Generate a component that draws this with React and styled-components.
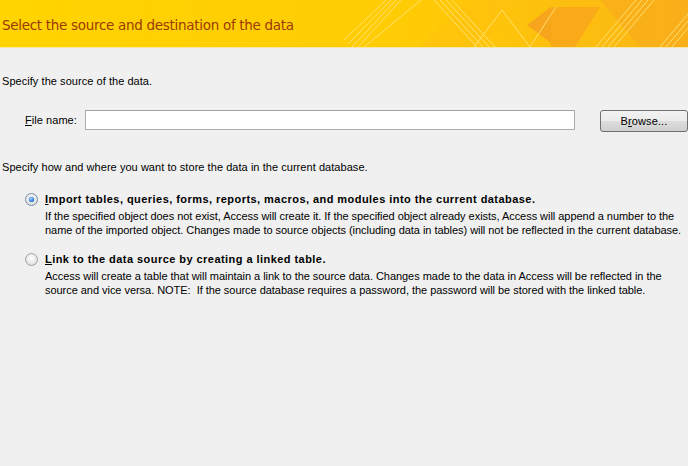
import React from 'react';
import styled, { createGlobalStyle } from 'styled-components';

const GlobalStyle = createGlobalStyle`
  html, body {
    margin: 0;
    padding: 0;
    background: #f0f0f0;
  }
  body {
    font-family: 'Liberation Sans', Arial, sans-serif;
    font-size: 11px;
    color: #000;
  }
`;

const Page = styled.div`
  width: 688px;
  height: 466px;
  overflow: hidden;
  background: #f0f0f0;
`;

const Banner = styled.div`
  position: relative;
  height: 47px;
  border-bottom: 1px solid #f6e7a8;
  background: #ffd200;
  overflow: hidden;
`;

const BannerArt = styled.svg`
  position: absolute;
  left: 0;
  top: 0;
`;

const Title = styled.h1`
  position: relative;
  margin: 0;
  padding: 17px 0 0 2px;
  font-family: 'DejaVu Sans', sans-serif;
  font-size: 13.5px;
  font-weight: 400;
  letter-spacing: -0.3px;
  color: #9b3a05;
`;

const Body = styled.div`
  padding: 26px 0 0 2px;
`;

const Line = styled.p`
  margin: 0;
  line-height: 14px;
  letter-spacing: 0.05px;
`;

const FileRow = styled.div`
  display: flex;
  align-items: center;
  margin: 20px 0 28px 0;
`;

const Label = styled.label`
  width: 60px;
  padding-left: 23px;
  letter-spacing: 0.05px;
`;

const TextBox = styled.div`
  width: 488px;
  height: 18px;
  background: #fff;
  border: 1px solid #abadb3;
  border-top-color: #9fa2aa;
`;

const Button = styled.button`
  margin-left: 25px;
  width: 88px;
  height: 22px;
  margin-top: 2px;
  border: 1px solid #707070;
  border-radius: 3px;
  background: linear-gradient(#f2f2f2 0%, #ebebeb 50%, #dddddd 51%, #cfcfcf 100%);
  font-family: 'Liberation Sans', Arial, sans-serif;
  font-size: 11px;
  letter-spacing: 0.1px;
  color: #000;
  padding: 0;
`;

const Options = styled.div`
  margin-top: 18px;
  padding-left: 23px;
`;

const Option = styled.div`
  display: grid;
  grid-template-columns: 20px 1fr;
  margin-bottom: 15px;
`;

const Radio = styled.span`
  width: 11px;
  height: 11px;
  margin-top: 1px;
  border-radius: 50%;
  border: 1px solid ${p => (p.checked ? '#7a8ea6' : '#a3a3a3')};
  background: radial-gradient(circle at 50% 40%, #ffffff 0%, #e6e6e6 60%, #cfcfcf 100%);
  display: flex;
  align-items: center;
  justify-content: center;

  &::after {
    content: '';
    display: ${p => (p.checked ? 'block' : 'none')};
    width: 5px;
    height: 5px;
    border-radius: 50%;
    background: radial-gradient(circle at 40% 35%, #9fd6ff 0%, #2c7ad6 60%, #1a4f9a 100%);
    box-shadow: 0 0 1px #2a6cc0;
  }
`;

const OptionTitle = styled.div`
  font-weight: 700;
  line-height: 14px;
  letter-spacing: 0.45px;
  margin-bottom: 3px;
`;

const OptionText = styled.div`
  line-height: 14px;
  letter-spacing: -0.04px;
  white-space: nowrap;
`;

const Key = styled.span`
  text-decoration: underline;
`;

const HeaderArt = () => (
  <BannerArt width="688" height="47" viewBox="0 0 688 47">
    <defs>
      <linearGradient id="bg" x1="0" y1="0" x2="1" y2="0">
        <stop offset="0" stopColor="#ffd400" />
        <stop offset="0.6" stopColor="#ffcb05" />
        <stop offset="1" stopColor="#fbb516" />
      </linearGradient>
    </defs>
    <rect width="688" height="47" fill="url(#bg)" />
    <polygon points="420,47 470,0 520,0 480,47" fill="#ffc20e" opacity="0.7" />
    <polygon points="527,25 551,7 551,43" fill="#f7a51c" />
    <polygon points="551,7 600,7 575,47 551,47" fill="#f9a61a" opacity="0.9" />
    <polygon points="600,0 688,0 688,47 640,47" fill="#f9ae1a" opacity="0.8" />
    <g stroke="#ffe680" strokeWidth="1" opacity="0.85">
      <line x1="344" y1="40" x2="386" y2="0" />
      <line x1="348" y1="44" x2="391" y2="0" />
      <line x1="352" y1="47" x2="396" y2="0" />
      <line x1="358" y1="47" x2="401" y2="0" />
      <line x1="364" y1="47" x2="421" y2="0" />
      <line x1="434" y1="0" x2="477" y2="47" />
      <line x1="440" y1="0" x2="483" y2="47" />
      <line x1="446" y1="0" x2="489" y2="47" />
      <line x1="452" y1="0" x2="495" y2="47" />
      <line x1="474" y1="47" x2="502" y2="10" />
      <line x1="502" y1="10" x2="530" y2="47" />
      <line x1="530" y1="47" x2="556" y2="7" />
      <line x1="596" y1="47" x2="636" y2="0" />
      <line x1="602" y1="47" x2="642" y2="0" />
      <line x1="608" y1="47" x2="648" y2="0" />
      <line x1="614" y1="47" x2="654" y2="0" />
      <line x1="660" y1="47" x2="688" y2="14" />
      <line x1="666" y1="47" x2="688" y2="21" />
      <line x1="672" y1="47" x2="688" y2="28" />
    </g>
  </BannerArt>
);

export default function App() {
  return (
    <Page>
      <GlobalStyle />
      <Banner>
        <HeaderArt />
        <Title>Select the source and destination of the data</Title>
      </Banner>

      <Body>
        <Line>Specify the source of the data.</Line>

        <FileRow>
          <Label><Key>F</Key>ile name:</Label>
          <TextBox />
          <Button>B<Key>r</Key>owse...</Button>
        </FileRow>

        <Line>Specify how and where you want to store the data in the current database.</Line>

        <Options>
          <Option>
            <Radio checked />
            <div>
              <OptionTitle><Key>I</Key>mport tables, queries, forms, reports, macros, and modules into the current database.</OptionTitle>
              <OptionText>
                If the specified object does not exist, Access will create it. If the specified object already exists, Access will append a number to the<br />
                name of the imported object. Changes made to source objects (including data in tables) will not be reflected in the current database.
              </OptionText>
            </div>
          </Option>
          <Option>
            <Radio />
            <div>
              <OptionTitle><Key>L</Key>ink to the data source by creating a linked table.</OptionTitle>
              <OptionText>
                Access will create a table that will maintain a link to the source data. Changes made to the data in Access will be reflected in the<br />
                source and vice versa. NOTE:&nbsp; If the source database requires a password, the password will be stored with the linked table.
              </OptionText>
            </div>
          </Option>
        </Options>
      </Body>
    </Page>
  );
}
